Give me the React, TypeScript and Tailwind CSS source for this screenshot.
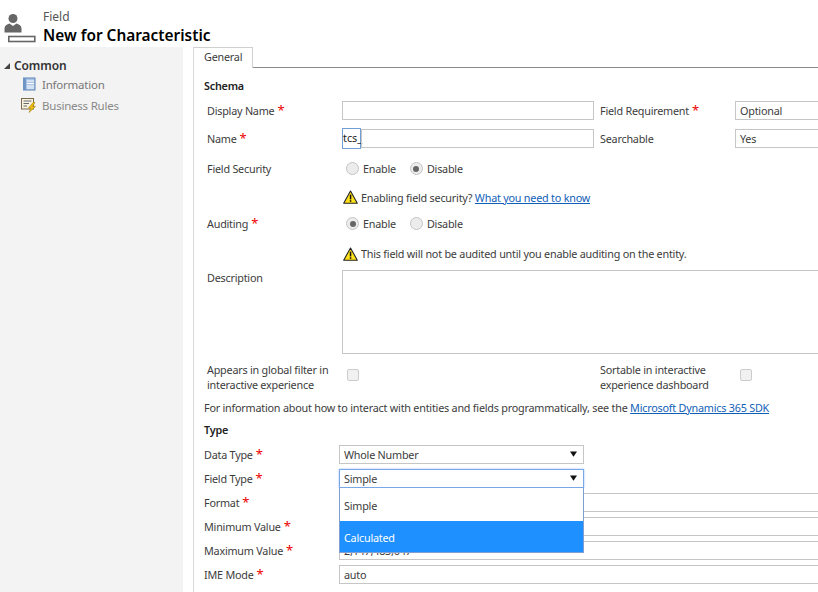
const font = { fontFamily: '"Noto Sans", "Open Sans", sans-serif' };

function Star({ className = "" }: { className?: string }) {
  return <span className={`text-[#e00] text-[13px] leading-[10px] ml-[3px] relative top-[-1px] ${className}`}>*</span>;
}

function Radio({ on }: { on?: boolean }) {
  return (
    <span className="w-[13px] h-[13px] rounded-full border border-[#c4c4c4] bg-[#ececec] flex items-center justify-center shrink-0">
      {on && <span className="w-[6px] h-[6px] rounded-full bg-[#666]" />}
    </span>
  );
}

function Warn() {
  return (
    <svg width="15" height="14" viewBox="0 0 15 14" className="shrink-0">
      <path d="M7.5 1 L14.3 13.2 H0.7 Z" fill="#ffe11a" stroke="#222" strokeWidth="1.1" strokeLinejoin="round" />
      <rect x="6.8" y="4.6" width="1.5" height="4.8" fill="#111" />
      <rect x="6.8" y="10.2" width="1.5" height="1.6" fill="#111" />
    </svg>
  );
}

function Caret() {
  return (
    <svg width="7" height="6" viewBox="0 0 7 6" className="shrink-0 relative top-[-1px]">
      <path d="M0 0.5 H7 L3.5 5.800 Z" fill="#111" />
    </svg>
  );
}

function Check() {
  return <span className="w-[12px] h-[12px] mb-[4px] rounded-[2px] border border-[#ccc] bg-[#f1f1f1] block shrink-0" />;
}

function TopRow({ label, right, value, h, children }: { label: string; right?: string; value?: string; h: string; children?: React.ReactNode }) {
  return (
    <div className={`flex items-center ${h}`}>
      <div className="w-[138px] pl-[3px] flex items-center shrink-0">{label}<Star /></div>
      {children}
      {right && (
        <>
          <div className="ml-[6px] w-[135px] flex items-center shrink-0">{right}<Star className={right === "Searchable" ? "hidden" : ""} /></div>
          <div className="h-[19px] w-[200px] border border-[#c6c6c6] pl-[4px] flex items-center shrink-0">{value}</div>
        </>
      )}
    </div>
  );
}

function TypeRow({ label, children, mt }: { label: string; children: React.ReactNode; mt: string }) {
  return (
    <div className={`flex items-center h-[19px] ${mt}`}>
      <div className="w-[135px] flex items-center shrink-0">{label}<Star /></div>
      {children}
    </div>
  );
}

export default function App() {
  return (
    <div style={font} className="w-[818px] h-[592px] overflow-hidden bg-white text-[#3c3c3c] text-[10.8px] tracking-[-0.22px] leading-[15px] flex flex-col">
      <header className="h-[47px] shrink-0 flex items-start">
        <svg width="34" height="34" viewBox="0 0 34 34" className="ml-[4px] mt-[13px] shrink-0">
          <circle cx="9" cy="5.5" r="4.5" fill="#666" />
          <path d="M0.5 19.500 V15.500 C0.5 12.800 3 11.200 5.500 10.600 L9 13 L12.500 10.600 C15 11.200 17.500 12.800 17.500 15.500 V19.500 Z" fill="#666" />
          <rect x="4.800" y="23.500" width="26" height="5" fill="none" stroke="#666" strokeWidth="1.600" />
        </svg>
        <div className="ml-[5px] pt-[9px]">
          <div className="text-[12px] tracking-normal leading-[15px] text-[#555]">Field</div>
          <div className="mt-[2px] text-[15.400px] tracking-normal leading-[20px] font-semibold text-black">New for Characteristic</div>
        </div>
      </header>
      <div className="flex flex-1 min-h-0">
        <aside className="w-[183px] shrink-0 bg-[#f3f3f3] pt-[11px]">
          <div className="flex items-center h-[15px] pl-[3px]">
            <svg width="8" height="8" viewBox="0 0 8 8" className="shrink-0"><path d="M7 1 V7 H1 Z" fill="#444" /></svg>
            <span className="ml-[3px] text-[12px] tracking-[-0.1px] font-semibold text-[#333]">Common</span>
          </div>
          <div className="mt-[1px] flex items-center h-[20px] pl-[22px] text-[#777] text-[11.500px]">
            <svg width="14" height="14" viewBox="0 0 14 14" className="shrink-0">
              <rect x="1.500" y="1" width="11.500" height="12" fill="#a9c4e6" stroke="#5f83b5" />
              <rect x="1" y="1" width="3" height="12" fill="#6f94c6" />
              <path d="M5 4 H12 M5 6.500 H12 M5 9 H12 M5 11 H12" stroke="#fff" strokeWidth="1" />
            </svg>
            <span className="ml-[6px]">Information</span>
          </div>
          <div className="mt-[1px] flex items-center h-[20px] pl-[21px] text-[#888] text-[11.500px]">
            <svg width="16" height="15" viewBox="0 0 16 15" className="shrink-0">
              <rect x="0.500" y="0.500" width="12" height="10.500" fill="#f7f2e2" stroke="#7a6a4a" />
              <path d="M2.500 3 H10.500 M2.500 5.500 H8 M2.500 8 H6" stroke="#6a6a6a" />
              <path d="M12 4.500 L7.500 10 H10 L8 14.500 L14.500 8.500 H11.500 L14 4.500 Z" fill="#f2c20f" stroke="#a9820a" strokeWidth="0.600" />
            </svg>
            <span className="ml-[5px]">Business Rules</span>
          </div>
        </aside>
        <main className="ml-[10px] flex-1 min-w-0 border-l border-[#d9d9d9] relative">
          <div className="flex h-[21px]">
            <div className="w-[59px] h-[21px] border-t border-r border-[#d0d0d0] pl-[10px] pt-[1px] bg-white shrink-0">General</div>
            <div className="flex-1 border-b border-[#8a8a8a]" />
          </div>
          <div className="pl-[10px] w-[640px]">
            <div className="mt-[10px] h-[15px] font-semibold text-[#222]">Schema</div>
            <div className="mt-[8px]">
              <TopRow label="Display Name" right="Field Requirement" value="Optional" h="h-[19px]">
                <div className="h-[19px] w-[252px] border border-[#c6c6c6] shrink-0" />
              </TopRow>
            </div>
            <div className="mt-[8px]">
              <TopRow label="Name" right="Searchable" value="Yes" h="h-[21px]">
                <div className="w-[252px] h-[21px] flex items-center shrink-0">
                  <div className="w-[19px] h-[21px] border border-[#6f9fd4] text-[#222] tracking-normal flex items-center shrink-0 pb-[2px]">tcs_</div>
                  <div className="flex-1 h-[19px] border border-[#c6c6c6]" />
                </div>
              </TopRow>
            </div>
            <div className="mt-[12px] h-[15px] flex items-center">
              <div className="w-[138px] pl-[3px] shrink-0">Field Security</div>
              <div className="ml-[4px] flex items-center"><Radio /><span className="ml-[4px]">Enable</span></div>
              <div className="ml-[14px] flex items-center"><Radio on /><span className="ml-[4px]">Disable</span></div>
            </div>
            <div className="mt-[13px] h-[16px] flex items-center pl-[139px]">
              <Warn /><span className="ml-[3px]">Enabling field security? <a className="text-[#1160b7] underline">What you need to know</a></span>
            </div>
            <div className="mt-[11px] h-[15px] flex items-center">
              <div className="w-[138px] pl-[3px] shrink-0 flex items-center">Auditing<Star /></div>
              <div className="ml-[4px] flex items-center"><Radio on /><span className="ml-[4px]">Enable</span></div>
              <div className="ml-[14px] flex items-center"><Radio /><span className="ml-[4px]">Disable</span></div>
            </div>
            <div className="mt-[15px] h-[15px] flex items-center pl-[139px]">
              <Warn /><span className="ml-[3px]">This field will not be audited until you enable auditing on the entity.</span>
            </div>
            <div className="mt-[9px] flex items-start">
              <div className="w-[138px] pl-[3px] shrink-0">Description</div>
              <div className="h-[84px] w-[500px] border border-[#c6c6c6] shrink-0" />
            </div>
            <div className="mt-[8px] flex items-center h-[30px]">
              <div className="w-[143px] pl-[3px] shrink-0">Appears in global filter in<br />interactive experience</div>
              <Check />
              <div className="ml-[241px] w-[140px] shrink-0">Sortable in interactive<br />experience dashboard</div>
              <Check />
            </div>
            <div className="mt-[8px] h-[15px] whitespace-nowrap">For information about how to interact with entities and fields programmatically, see the <a className="text-[#1160b7] underline">Microsoft Dynamics 365 SDK</a></div>
            <div className="mt-[7px] h-[15px] font-semibold text-[#222]">Type</div>
            <TypeRow label="Data Type" mt="mt-[8px]">
              <div className="h-[19px] w-[245px] border border-[#c6c6c6] px-[4px] flex items-center justify-between shrink-0">Whole Number<span className="mr-[2px] flex"><Caret /></span></div>
            </TypeRow>
            <div className="relative">
              <TypeRow label="Field Type" mt="mt-[5px]">
                <div className="h-[19px] w-[245px] border border-[#7aa7e8] shadow-[0_0_2px_#9cc2f5] px-[4px] flex items-center justify-between shrink-0 bg-white relative z-10">Simple<span className="mr-[2px] flex"><Caret /></span></div>
              </TypeRow>
              <div className="absolute left-[135px] top-[19px] w-[245px] h-[65px] z-10 bg-white border-x border-b border-[#7f9fd0] flex flex-col">
                <div className="h-[33px] flex items-center pl-[4px] pt-[2px] shrink-0">Simple</div>
                <div className="flex-1 flex items-center pl-[4px] pt-[1px] bg-[#1e90ff] text-white">Calculated</div>
              </div>
            </div>
            <TypeRow label="Format" mt="mt-[5px]"><div className="h-[19px] w-[500px] border border-[#c6c6c6] shrink-0" /></TypeRow>
            <TypeRow label="Minimum Value" mt="mt-[5px]"><div className="h-[19px] w-[500px] border border-[#c6c6c6] shrink-0" /></TypeRow>
            <TypeRow label="Maximum Value" mt="mt-[5px]"><div className="h-[19px] w-[500px] border border-[#c6c6c6] shrink-0 pl-[4px] flex items-center">2,147,483,647</div></TypeRow>
            <TypeRow label="IME Mode" mt="mt-[5px]"><div className="h-[19px] w-[500px] border border-[#c6c6c6] shrink-0 pl-[4px] flex items-center">auto</div></TypeRow>
          </div>
        </main>
      </div>
    </div>
  );
}
